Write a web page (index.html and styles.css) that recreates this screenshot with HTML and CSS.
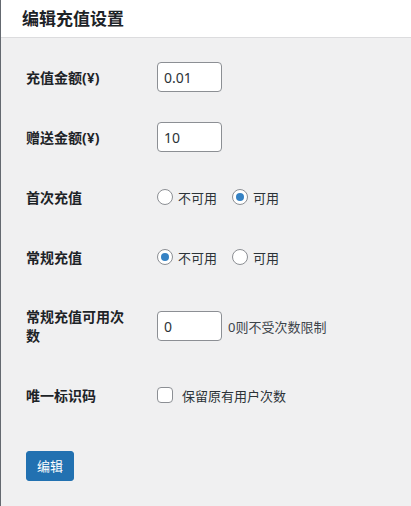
FILE: index.html
```html
<!DOCTYPE html>
<html lang="zh-CN">
<head>
<meta charset="utf-8">
<title>编辑充值设置</title>
<link rel="stylesheet" href="styles.css">
</head>
<body>
<header class="page-header">
  <h1 class="page-title">编辑充值设置</h1>
</header>
<form class="settings-form">
  <div class="row">
    <label class="row-label" for="amount">充值金额(¥)</label>
    <div class="row-field"><input class="text-input" id="amount" type="text" value="0.01"></div>
  </div>
  <div class="row">
    <label class="row-label" for="bonus">赠送金额(¥)</label>
    <div class="row-field"><input class="text-input" id="bonus" type="text" value="10"></div>
  </div>
  <div class="row">
    <div class="row-label">首次充值</div>
    <div class="row-field choices">
      <label class="choice"><input class="radio" type="radio" name="first">不可用</label>
      <label class="choice"><input class="radio" type="radio" name="first" checked>可用</label>
    </div>
  </div>
  <div class="row">
    <div class="row-label">常规充值</div>
    <div class="row-field choices">
      <label class="choice"><input class="radio" type="radio" name="regular" checked>不可用</label>
      <label class="choice"><input class="radio" type="radio" name="regular">可用</label>
    </div>
  </div>
  <div class="row row--tall">
    <label class="row-label" for="times">常规充值可用次数</label>
    <div class="row-field"><input class="text-input" id="times" type="text" value="0"><span class="hint">0则不受次数限制</span></div>
  </div>
  <div class="row">
    <div class="row-label">唯一标识码</div>
    <div class="row-field">
      <label class="choice choice--check"><input class="checkbox" type="checkbox">保留原有用户次数</label>
    </div>
  </div>
  <div class="actions">
    <button class="button-primary" type="button">编辑</button>
  </div>
</form>
</body>
</html>
```

FILE: styles.css
```css
* { box-sizing: border-box; }

html, body {
  height: 100%;
}

body {
  margin: 0;
  background: #f0f0f1;
  border-left: 1px solid #646970;
  font-family: "Noto Sans", "Noto Sans CJK SC", sans-serif;
  color: #2c3338;
}

.page-header {
  height: 38px;
  background: #fff;
  border-bottom: 1px solid #dcdcde;
  padding-left: 21px;
}

.page-title {
  margin: 0;
  font-size: 17px;
  line-height: 37px;
  font-weight: 700;
  color: #1d2327;
}

.settings-form {
  padding: 9px 0 0 25px;
}

.row {
  display: flex;
  align-items: center;
  min-height: 60px;
}

.row--tall {
  padding: 20px 0;
}

.row-label {
  width: 131px;
  flex: none;
  padding-right: 25px;
  font-size: 14px;
  line-height: 19px;
  font-weight: 700;
  color: #1d2327;
}

.row-field {
  display: flex;
  align-items: center;
  font-size: 13px;
}

.text-input {
  width: 65px;
  height: 30px;
  margin: 0;
  padding: 0 6px;
  border: 1px solid #8c8f94;
  border-radius: 4px;
  background: #fff;
  font-family: inherit;
  font-size: 14px;
  color: #2c3338;
}

.hint {
  margin-left: 6px;
  font-size: 13px;
  color: #3c434a;
}

.choices {
  gap: 15px;
}

.choice {
  display: flex;
  align-items: center;
  font-size: 13px;
  color: #2c3338;
}

.radio,
.checkbox {
  appearance: none;
  -webkit-appearance: none;
  width: 16px;
  height: 16px;
  margin: 0 5px 0 0;
  border: 1px solid #8c8f94;
  background: #fff;
  display: grid;
  place-items: center;
}

.radio {
  border-radius: 50%;
}

.radio:checked::before {
  content: "";
  width: 8px;
  height: 8px;
  border-radius: 50%;
  background: #3582c4;
}

.checkbox {
  border-radius: 4px;
  margin-right: 9px;
}

.actions {
  padding-top: 26px;
}

.button-primary {
  height: 30px;
  padding: 0 10px;
  border: 1px solid #2271b1;
  border-radius: 3px;
  background: #2271b1;
  color: #fff;
  font-family: inherit;
  font-size: 13px;
  line-height: 28px;
}
```
